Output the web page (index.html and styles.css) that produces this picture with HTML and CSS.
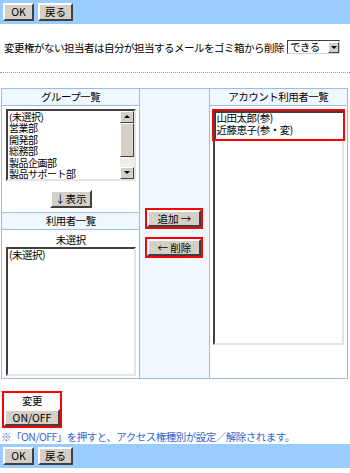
FILE: index.html
```html
<!DOCTYPE html>
<html>
<head>
<meta charset="utf-8">
<link rel="stylesheet" href="styles.css">
</head>
<body>

<div class="bar">
  <button class="btn btn-ok">OK</button>
  <button class="btn btn-back">戻る</button>
</div>

<div class="option">
  <span>変更権がない担当者は自分が担当するメールをゴミ箱から削除</span>
  <span class="select">できる<span class="drop"></span></span>
</div>

<hr class="dots">

<table class="main">
  <tr>
    <td class="col-left">
      <div class="head">グループ一覧</div>
      <div class="cell">
        <div class="list list-group">
          <div class="items">
            <div>(未選択)</div>
            <div>営業部</div>
            <div>開発部</div>
            <div>総務部</div>
            <div>製品企画部</div>
            <div>製品サポート部</div>
          </div>
          <div class="vscroll">
            <span class="arrow up"></span>
            <span class="thumb"></span>
            <span class="track"></span>
            <span class="arrow down"></span>
          </div>
        </div>
        <div class="center"><button class="btn btn-show">↓表示</button></div>
      </div>
      <div class="head head-mid">利用者一覧</div>
      <div class="cell cell-users">
        <div class="sub">未選択</div>
        <div class="list list-users">
          <div class="items">
            <div>(未選択)</div>
          </div>
        </div>
      </div>
    </td>
    <td class="col-mid">
      <div class="mark"><button class="btn btn-move">追加 →</button></div>
      <div class="mark"><button class="btn btn-move">← 削除</button></div>
    </td>
    <td class="col-right">
      <div class="head">アカウント利用者一覧</div>
      <div class="cell cell-account">
        <div class="marked">
          <div>山田太郎(参)</div>
          <div>近藤恵子(参・変)</div>
        </div>
        <div class="list list-account"></div>
      </div>
    </td>
  </tr>
</table>

<div class="change">
  <div class="change-label">変更</div>
  <button class="btn btn-toggle">ON/OFF</button>
</div>

<p class="note">※「ON/OFF」を押すと、アクセス権種別が設定／解除されます。</p>

<div class="bar">
  <button class="btn btn-ok">OK</button>
  <button class="btn btn-back">戻る</button>
</div>

</body>
</html>
```

FILE: styles.css
```css
body {
  margin: 0;
  font-family: "Noto Sans CJK JP", "DejaVu Sans", sans-serif;
  font-size: 10.5px;
  letter-spacing: -0.5px;
  color: #000;
  background: #fff;
  width: 350px;
}

.bar {
  background-color: #99ccff;
  height: 24px;
  padding: 3px 0 0 3px;
  box-sizing: border-box;
  display: flex;
  gap: 4px;
}

.btn {
  font-family: inherit;
  font-size: 10.5px;
  letter-spacing: 0;
  line-height: 12px;
  white-space: nowrap;
  background: #d4d0c8;
  color: #000;
  border: 2px solid;
  border-color: #fff #404040 #404040 #fff;
  padding: 0;
  height: 18px;
  margin: 0;
}

.btn-ok {
  width: 31px;
}

.btn-back {
  width: 35px;
}

.option {
  display: flex;
  align-items: center;
  gap: 3px;
  padding: 16px 0 0 4px;
  height: 14px;
  white-space: nowrap;
}

.select {
  display: inline-flex;
  align-items: center;
  justify-content: space-between;
  width: 49px;
  height: 12px;
  border: 1px solid;
  border-color: #404040 #d4d0c8 #d4d0c8 #404040;
  padding-left: 2px;
  background: #fff;
  line-height: 12px;
}

.drop {
  width: 11px;
  height: 11px;
  background: #d4d0c8;
  border: 1px solid;
  border-color: #fff #404040 #404040 #fff;
  box-sizing: border-box;
  position: relative;
}

.drop::after {
  content: "";
  position: absolute;
  left: 2px;
  top: 3px;
  border-left: 3px solid transparent;
  border-right: 3px solid transparent;
  border-top: 3px solid #000;
}

.dots {
  border: 0;
  border-top: 1px dotted #999;
  margin: 18px 0 0 0;
}

.main {
  border-collapse: collapse;
  margin: 15px 0 0 1px;
  width: 347px;
}

.main td {
  border: 1px solid #99bbee;
  padding: 0;
  vertical-align: top;
}

.col-left {
  width: 137px;
}

.col-mid {
  width: 68px;
  background: #f0f8ff;
}

.main .col-mid {
  padding-top: 119px;
}

.col-right {
  width: 137px;
}

.head {
  background: #f0f8ff;
  text-align: center;
  height: 16px;
  line-height: 16px;
  border-bottom: 1px solid #99bbee;
}

.head-mid {
  border-top: 1px solid #99bbee;
}

.cell {
  padding: 3px 3px 4px 3px;
}

.center {
  text-align: center;
  margin-top: 9px;
}

.btn-show {
  width: 42px;
}

.list {
  background: #fff;
  border: 2px solid;
  border-color: #404040 #e4e4e4 #e4e4e4 #404040;
  display: flex;
  line-height: 12px;
  box-sizing: border-box;
  overflow: hidden;
}

.items {
  flex: 1;
  padding: 0 0 0 1px;
}

.list-group {
  height: 72px;
  width: 130px;
  margin-left: 1px;
}

.list-group .items {
  font-size: 10px;
  line-height: 11.4px;
}

.vscroll {
  width: 14px;
  display: flex;
  flex-direction: column;
  background: #eeeeee;
}

.arrow {
  height: 12px;
  background: #d4d0c8;
  border: 1px solid;
  border-color: #fff #404040 #404040 #fff;
  box-sizing: border-box;
  position: relative;
}

.arrow::after {
  content: "";
  position: absolute;
  left: 3px;
  top: 3px;
  border-left: 3px solid transparent;
  border-right: 3px solid transparent;
}

.up::after {
  border-bottom: 3px solid #000;
}

.down::after {
  border-top: 3px solid #000;
}

.thumb {
  height: 34px;
  background: #d4d0c8;
  border: 1px solid;
  border-color: #fff #404040 #404040 #fff;
  box-sizing: border-box;
}

.track {
  flex: 1;
}

.cell-users {
  padding-bottom: 2px;
}

.sub {
  text-align: center;
  line-height: 13px;
}

.list-users {
  height: 129px;
  width: 130px;
  margin: 1px 0 0 1px;
}

.cell-account {
  padding: 3px 2px 0 2px;
}

.marked {
  height: 27px;
  border: 2px solid #ff0000;
  padding: 1px 0 0 3px;
  line-height: 12px;
  position: relative;
  z-index: 1;
  background: #fff;
  box-shadow: inset 2px 2px 0 #404040;
}

.list-account {
  height: 205px;
  width: 131px;
  margin: -1px 0 0 1px;
  border-top: 0;
}

.mark {
  display: inline-block;
  border: 2px solid #ff0000;
  margin: 0 0 8px 5px;
  line-height: 0;
}

.btn-move {
  width: 54px;
  height: 17px;
}

.change {
  margin: 12px 0 0 2px;
  width: 60px;
  border: 2px solid #ff0000;
  box-sizing: border-box;
  display: flex;
  flex-direction: column;
}

.change-label {
  text-align: center;
  height: 16px;
  line-height: 16px;
}

.btn-toggle {
  width: 100%;
  height: 17px;
}

.note {
  color: #3366cc;
  margin: 2px 0 0 1px;
  line-height: 13px;
  height: 13px;
  white-space: nowrap;
}

.note + .bar {
  margin-top: 1px;
}
```
